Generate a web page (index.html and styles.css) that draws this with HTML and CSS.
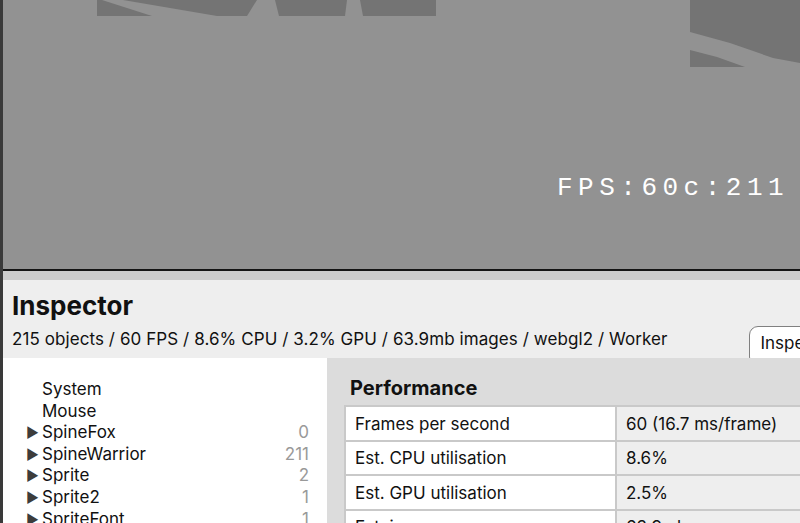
FILE: index.html
```html
<!DOCTYPE html>
<html lang="en">
<head>
  <meta charset="UTF-8">
  <title>Inspector</title>
  <link rel="stylesheet" href="styles.css">
</head>
<body>

<div class="app">
  <!-- game canvas -->
  <div class="stage">
    <svg width="797" height="269" viewBox="3 0 797 269">
      <rect x="3" y="0" width="797" height="269" fill="#929292"/>
      <g fill="#747474">
        <polygon points="97,0 102,0 152,16 97,16"/>
        <polygon points="123,0 257,0 247,16 217,16"/>
        <polygon points="275,0 347,0 345,16 279,16"/>
        <polygon points="360,0 436,0 436,16 363,16"/>
        <polygon points="690,0 800,0 800,63 773,58 730,43 690,32"/>
        <polygon points="690,50 717,57 745,67 690,67"/>
      </g>
      <text class="fps" x="557" y="195">FPS:60c:211</text>
    </svg>
  </div>

  <div class="splitter"></div>

  <div class="inspector-head">
    <h1>Inspector</h1>
    <div class="summary">
      <span>215 objects / 60 FPS / 8.6% CPU / 3.2% GPU / 63.9mb images / webgl2 / Worker</span>
      <button class="tab-btn">Inspector</button>
    </div>
  </div>

  <div class="inspector-body">
    <ul class="tree">
      <li><span class="arrow"></span><span class="name">System</span></li>
      <li><span class="arrow"></span><span class="name">Mouse</span></li>
      <li><span class="arrow">&#9654;</span><span class="name">SpineFox</span><span class="count">0</span></li>
      <li><span class="arrow">&#9654;</span><span class="name">SpineWarrior</span><span class="count">211</span></li>
      <li><span class="arrow">&#9654;</span><span class="name">Sprite</span><span class="count">2</span></li>
      <li><span class="arrow">&#9654;</span><span class="name">Sprite2</span><span class="count">1</span></li>
      <li><span class="arrow">&#9654;</span><span class="name">SpriteFont</span><span class="count">1</span></li>
    </ul>

    <div class="details">
      <h2>Performance</h2>
      <table class="props">
        <tr><td>Frames per second</td><td>60 (16.7 ms/frame)</td></tr>
        <tr><td>Est. CPU utilisation</td><td>8.6%</td></tr>
        <tr><td>Est. GPU utilisation</td><td>2.5%</td></tr>
        <tr><td>Est. image memory</td><td>63.9mb</td></tr>
      </table>
    </div>
  </div>
</div>

</body>
</html>
```

FILE: styles.css
```css
html, body {
  margin: 0;
  padding: 0;
  height: 100%;
  overflow: hidden;
}

body {
  font-family: Inter, 'Liberation Sans', sans-serif;
  background: #3a3a3a;
  color: #111;
}

.app {
  margin-left: 3px;
  height: 523px;
  display: flex;
  flex-direction: column;
  overflow: hidden;
}

.stage {
  height: 269px;
  border-bottom: 2px solid #141414;
  overflow: hidden;
}
.stage svg { display: block; }

.fps {
  font-family: 'Liberation Mono', monospace;
  font-size: 26px;
  letter-spacing: 5.5px;
  fill: #fff;
}

.splitter {
  height: 9px;
  background: #cbcbcb;
}

.inspector-head {
  height: 78px;
  background: #eeeeee;
  padding: 0 9px;
  overflow: hidden;
  flex-shrink: 0;
}

h1 {
  margin: 0;
  padding-top: 11px;
  font-size: 26px;
  line-height: 30px;
  font-weight: 700;
}

.summary {
  display: flex;
  justify-content: space-between;
  align-items: flex-start;
  margin-top: 7px;
  font-size: 17px;
  line-height: 22px;
  letter-spacing: 0.08px;
  white-space: nowrap;
}

.tab-btn {
  margin-top: -2px;
  margin-right: -56px;
  padding: 6px 10px 12px;
  font-family: inherit;
  font-size: 17px;
  background: #fff;
  border: 1px solid #808080;
  border-radius: 9px;
  color: #111;
}

.inspector-body {
  flex: 1;
  display: flex;
  overflow: hidden;
}

.tree {
  width: 324px;
  flex-shrink: 0;
  background: #fff;
  margin: 0;
  padding: 21px 18px 0 23px;
  box-sizing: border-box;
  list-style: none;
  font-size: 17px;
  line-height: 21.6px;
}
.tree li {
  display: flex;
  align-items: center;
}
.arrow {
  width: 16px;
  font-size: 14px;
  color: #3c3c3c;
}
.name { flex: 1; }
.count { color: #999; }

.details {
  flex: 1;
  background: #dcdcdc;
  padding: 18px 0 0 17px;
  overflow: hidden;
}

h2 {
  margin: 0 0 5px 6px;
  font-size: 20px;
  line-height: 24px;
  font-weight: 700;
}

.props {
  border-collapse: collapse;
  width: 520px;
  font-size: 17px;
}
.props td {
  border: 2px solid #c9c9c9;
  height: 31.5px;
  padding: 1px 9px 0;
  background: #fff;
  white-space: nowrap;
}
.props td:first-child { width: 251px; }
.props td:last-child { background: #eeeeee; }
```
